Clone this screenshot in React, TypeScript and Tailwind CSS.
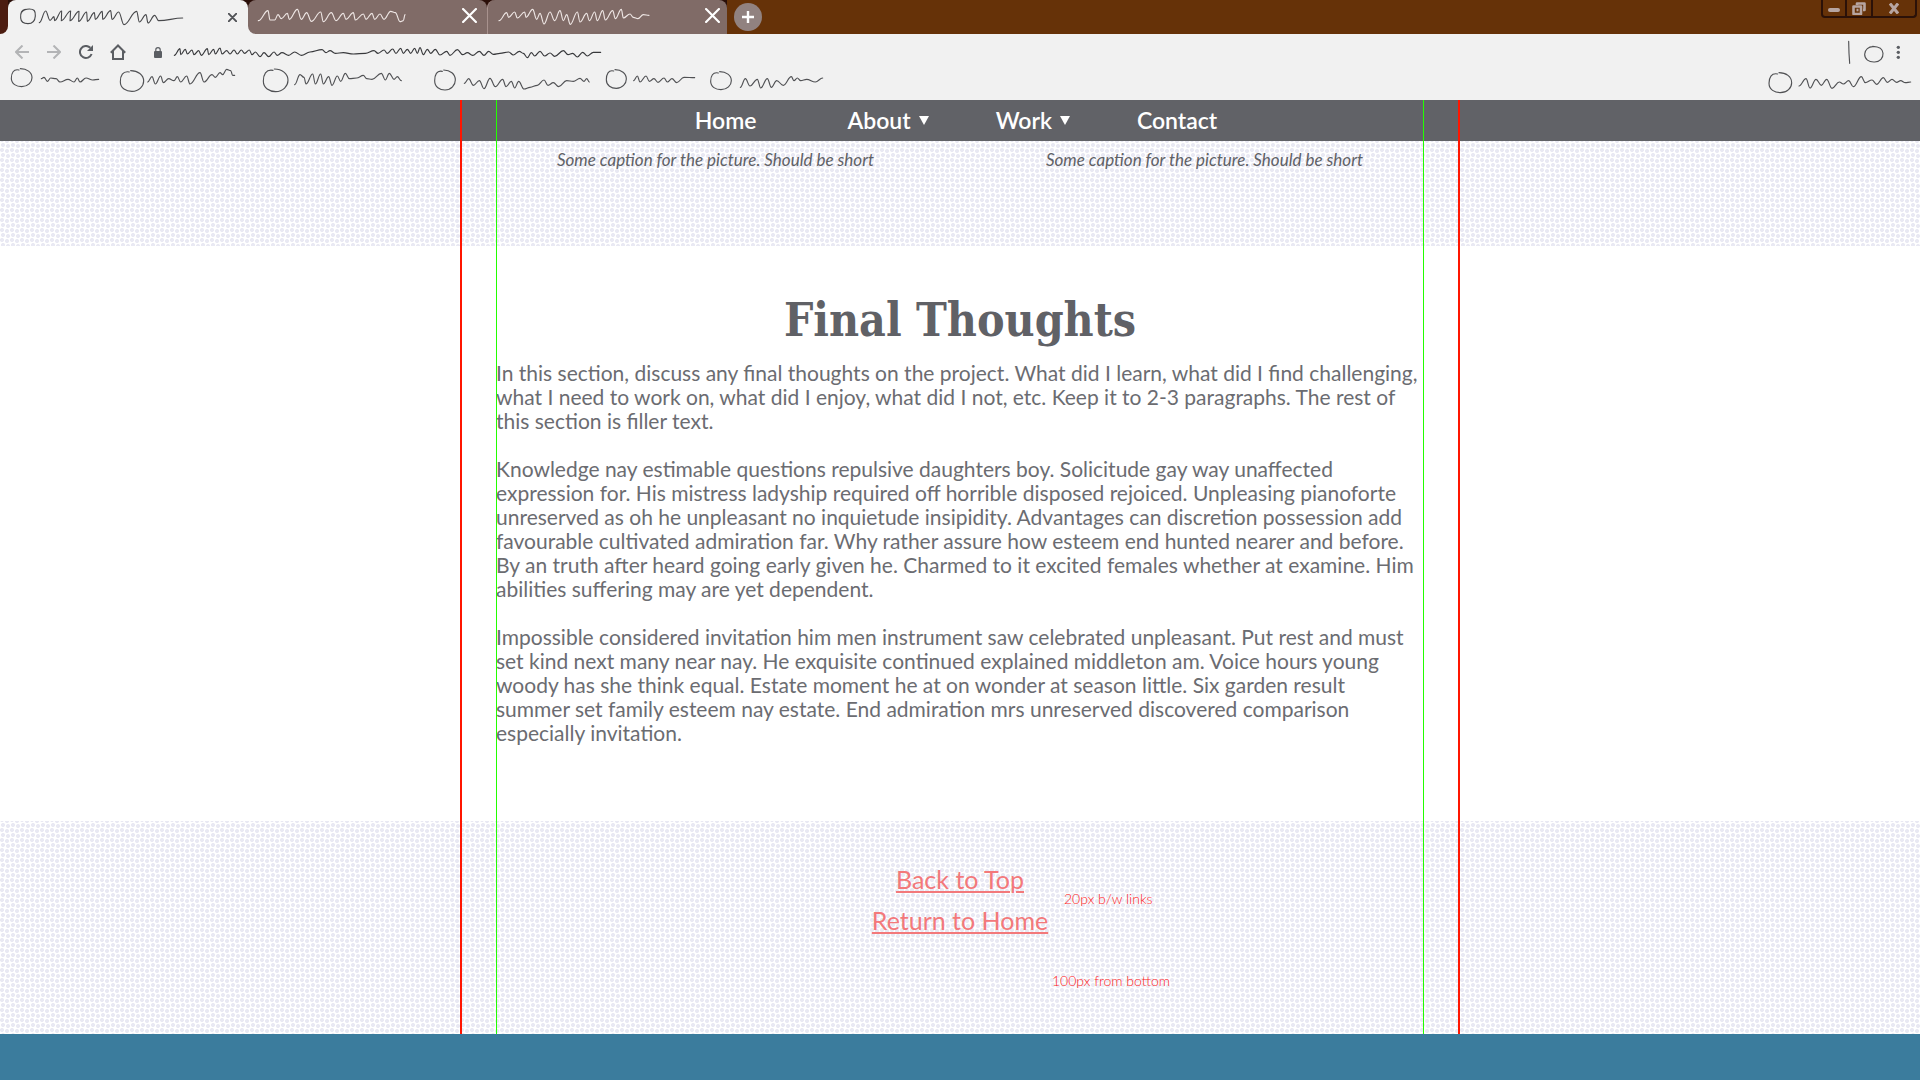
import type { ReactNode } from "react";

/* Sketch strokes use a drawing space of three units per screen pixel. */
type Box = [number, number, number, number];

function smooth(points: string) {
  const p = points.split(" ").map((s) => s.split(",").map(Number));
  let d = `M${p[0][0]} ${p[0][1]}`;
  for (let i = 1; i < p.length; i++) {
    const [ax, ay] = p[i - 1];
    const [bx, by] = p[i];
    const k = (bx - ax) * 0.4;
    d += `C${ax + k} ${ay} ${bx - k} ${by} ${bx} ${by}`;
  }
  return d;
}

function Sketch({ box, children }: { box: Box; children: ReactNode }) {
  return (
    <svg
      width={box[2] / 3}
      height={box[3] / 3}
      viewBox={box.join(" ")}
      fill="none"
      stroke="currentColor"
      strokeWidth="3.4"
      strokeLinecap="round"
      strokeLinejoin="round"
      className="shrink-0 overflow-visible"
      aria-hidden="true"
    >
      {children}
    </svg>
  );
}

type Bookmark = { box: Box; ring: Box; line: string };

const bookmarks: Bookmark[] = [
  {
    box: [30, 210, 327, 90],
    ring: [65, 233, 31, 27],
    line: "124,236 132,232 142,244 152,234 168,236 180,246 204,238 222,246 232,234 240,246 258,234 278,240 296,238",
  },
  {
    box: [357, 210, 429, 90],
    ring: [396, 243, 35, 31],
    line: "443,246 456,230 466,252 482,228 490,248 506,236 522,242 532,230 542,246 560,228 570,252 600,218 612,246 636,224 646,232 660,218 668,224 680,208 692,212 698,226 704,226",
  },
  {
    box: [786, 210, 516, 90],
    ring: [827, 241, 37, 34],
    line: "884,254 900,224 912,232 918,252 938,222 946,252 962,222 970,252 986,230 996,256 1012,228 1022,244 1036,220 1048,236 1070,234 1090,226 1100,236 1116,238 1144,220 1156,240 1168,220 1182,238 1192,230 1204,242",
  },
  {
    box: [1302, 210, 513, 90],
    ring: [1335, 240, 31, 30],
    line: "1393,250 1406,236 1420,256 1438,242 1452,266 1470,235 1486,260 1508,238 1518,260 1534,244 1544,264 1556,244 1572,267 1590,262 1612,256 1632,240 1644,256 1660,248 1676,260 1700,242 1720,244 1740,235 1752,244 1760,236 1768,246",
  },
  {
    box: [1815, 210, 315, 90],
    ring: [1849, 237, 30, 28],
    line: "1901,242 1912,228 1920,246 1938,228 1948,244 1962,236 1974,247 1992,234 2002,246 2016,236 2030,248 2052,232 2084,233",
  },
  {
    box: [2130, 210, 342, 90],
    ring: [2163, 242, 31, 27],
    line: "2221,262 2236,236 2250,258 2272,238 2282,264 2302,236 2314,262 2330,242 2350,256 2374,230 2382,242 2392,234 2402,242 2420,238 2446,246 2468,234",
  },
];

const readingList: Bookmark = {
  box: [5304, 210, 432, 90],
  ring: [5341, 248, 34, 30],
  line: "5397,258 5418,236 5430,264 5448,238 5464,256 5480,238 5496,265 5518,246 5530,252 5546,242 5560,260 5584,230 5596,248 5616,240 5630,253 5650,233 5662,247 5676,238 5690,247 5702,242 5716,248 5732,246",
};

function BookmarkButton({ item, label }: { item: Bookmark; label: string }) {
  const [cx, cy, rx, ry] = item.ring;
  return (
    <button type="button" aria-label={label} className="shrink-0 text-[#505154]">
      <Sketch box={item.box}>
        <path
          d={`M${cx - 8} ${cy - ry + 4}C${cx - rx * 0.8} ${cy - ry} ${cx - rx} ${cy - ry * 0.5} ${cx - rx} ${cy + 2}C${cx - rx} ${cy + ry * 0.7} ${cx - rx * 0.5} ${cy + ry} ${cx} ${cy + ry}C${cx + rx * 0.6} ${cy + ry} ${cx + rx} ${cy + ry * 0.5} ${cx + rx} ${cy}C${cx + rx} ${cy - ry * 0.6} ${cx + rx * 0.5} ${cy - ry} ${cx - 4} ${cy - ry}`}
        />
        <path d={smooth(item.line)} />
      </Sketch>
    </button>
  );
}

function CloseIcon({ size, weight }: { size: number; weight: number }) {
  return (
    <svg width={size} height={size} viewBox="0 0 14 14" fill="none" stroke="currentColor" strokeWidth={weight} strokeLinecap="round" aria-hidden="true">
      <path d="M1 1L13 13M13 1L1 13" />
    </svg>
  );
}

function TabStrip() {
  return (
    <div className="flex h-[34px] bg-[#663208]">
      <div role="tablist" aria-label="Open tabs" className="flex bg-[linear-gradient(#2a0e08_50%,#f1f1f1_50%)]">
        <div className="w-2 rounded-br-lg bg-[#4c1c10]" />
        <div className="flex w-60 items-center rounded-t-lg bg-[#f1f1f1] pl-3">
          <button type="button" role="tab" aria-selected="true" aria-label="Current tab" className="text-[#47484b]">
            <Sketch box={[60, 0, 495, 102]}>
              <path d="M76 28C64 30 61 42 62 54C63 68 72 71 84 71C98 71 105 62 106 48C107 32 102 27 88 27C80 27 72 28 66 36" />
              <path d={smooth("118,68 137,33 150,61 162,50 164,62 185,33 184,62 212,33 210,62 237,34 236,64 260,36 262,64 283,38 286,58 307,34 308,58 332,32 336,58 356,36 372,74 410,34 418,66 438,44 444,69 464,46 476,62 548,54")} />
            </Sketch>
          </button>
          <button type="button" aria-label="Close current tab" className="ml-auto flex size-6 items-center justify-center text-[#505256]">
            <CloseIcon size={9} weight={3} />
          </button>
          <div className="w-1" />
        </div>
        <div className="flex w-[239px] items-center rounded-t-lg rounded-bl-lg bg-[#806b67] pl-2.5">
          <button type="button" role="tab" aria-selected="false" aria-label="Second tab" className="text-[#eee6e4]">
            <Sketch box={[774, 0, 444, 102]}>
              <path d={smooth("775,62 804,32 810,60 824,60 834,44 844,56 862,40 868,58 892,28 904,58 920,38 934,64 962,36 970,65 994,38 1008,62 1030,40 1038,58 1060,38 1066,60 1090,42 1098,58 1116,40 1124,58 1140,42 1152,58 1172,34 1186,38 1200,65 1210,62 1215,44")} />
            </Sketch>
          </button>
          <button type="button" aria-label="Close second tab" className="mr-1.5 mb-1 ml-auto flex size-6 items-center justify-center text-white">
            <CloseIcon size={15} weight={2} />
          </button>
        </div>
        <div className="flex w-60 items-center rounded-t-lg border-l border-[#a8928e] bg-[#806b67] pl-2.5">
          <button type="button" role="tab" aria-selected="false" aria-label="Third tab" className="text-[#eee6e4]">
            <Sketch box={[294, 0, 456, 102]}>
              <path d={smooth("297,62 320,38 326,52 344,36 352,54 374,36 378,52 398,28 410,58 420,40 432,72 450,36 464,62 480,32 490,62 500,44 511,73 532,36 540,66 560,40 568,62 584,36 592,62 608,32 616,60 638,32 646,56 664,28 670,54 690,42 700,52 714,56 730,44 747,46")} />
            </Sketch>
          </button>
          <button type="button" aria-label="Close third tab" className="mr-[3px] mb-1 ml-auto flex size-6 items-center justify-center text-white">
            <CloseIcon size={15} weight={2} />
          </button>
        </div>
      </div>
      <button type="button" aria-label="New tab" className="mt-[3px] ml-[7px] flex size-7 items-center justify-center rounded-full bg-[#918280] text-white">
        <svg width="12" height="12" viewBox="0 0 12 12" stroke="currentColor" strokeWidth="2.4" aria-hidden="true">
          <path d="M6 0V12M0 6H12" />
        </svg>
      </button>
      <div className="mr-[3px] ml-auto flex h-[18px] divide-x-2 divide-[#2b1108] rounded-b-sm border-2 border-t-0 border-[#2b1108] text-[#b7a5a1]">
        <button type="button" aria-label="Minimize" className="flex w-6 items-end justify-center pb-1">
          <span className="h-1 w-3 rounded-full bg-current" />
        </button>
        <button type="button" aria-label="Restore" className="flex w-[26px] items-center justify-center">
          <svg width="14" height="13" viewBox="0 0 14 13" fill="none" stroke="currentColor" strokeWidth="2.6" strokeLinejoin="round" aria-hidden="true">
            <path d="M5 3V1.500H12.500V8H11" />
            <rect x="1.500" y="4.500" width="7.500" height="7.500" />
            <path d="M4.500 8H6.500" />
          </svg>
        </button>
        <button type="button" aria-label="Close window" className="flex w-[42px] items-center justify-center">
          <svg width="10" height="11" viewBox="0 0 10 11" fill="none" stroke="currentColor" strokeWidth="3" aria-hidden="true">
            <path d="M1 0.500L9 10.500M9 0.500L1 10.500" />
          </svg>
        </button>
      </div>
    </div>
  );
}

function Toolbar() {
  const url =
    "523,166 540,146 542,164 556,148 562,162 576,150 582,164 596,152 604,166 622,146 626,164 641,148 646,162 660,144 666,162 680,152 690,162 702,150 712,162 724,150 734,160 748,150 756,164 766,156 780,170 792,158 806,170 822,156 832,166 846,158 866,166 884,156 904,166 930,156 966,149 978,158 990,152 1006,160 1030,158 1060,162 1096,160 1122,152 1134,160 1152,150 1162,160 1178,147 1188,160 1202,145 1210,160 1222,148 1232,160 1244,145 1252,160 1260,143 1270,164 1282,148 1292,160 1306,148 1320,165 1340,154 1350,166 1372,149 1388,164 1402,158 1418,166 1438,154 1452,166 1466,154 1480,163 1500,160 1526,156 1540,165 1558,154 1570,160 1582,173 1594,158 1604,168 1620,154 1634,168 1650,159 1664,169 1690,152 1704,164 1718,160 1732,171 1748,157 1762,168 1780,157 1802,157";
  const button = "flex w-8 items-center justify-center";
  return (
    <div className="flex h-9 items-stretch pl-1.5 text-[#5b5e63]">
      <button type="button" aria-label="Back" className={`${button} text-[#b3b4b6]`}>
        <svg width="14" height="14" viewBox="0 0 14 14" fill="none" stroke="currentColor" strokeWidth="2" aria-hidden="true">
          <path d="M14 7H1.500M7.500 0.500L1 7L7.500 13.500" />
        </svg>
      </button>
      <button type="button" aria-label="Forward" className={`${button} text-[#b3b4b6]`}>
        <svg width="14" height="14" viewBox="0 0 14 14" fill="none" stroke="currentColor" strokeWidth="2" aria-hidden="true">
          <path d="M0 7H12.500M6.500 0.500L13 7L6.500 13.500" />
        </svg>
      </button>
      <button type="button" aria-label="Reload" className={button}>
        <svg width="14" height="14" viewBox="0 0 14 14" aria-hidden="true">
          <path d="M12.600 9A6 6 0 1 1 11.300 2.800" fill="none" stroke="currentColor" strokeWidth="2" />
          <path d="M14 0V6H8Z" fill="currentColor" />
        </svg>
      </button>
      <button type="button" aria-label="Home page" className={button}>
        <svg width="16" height="16" viewBox="0 0 16 16" fill="none" stroke="currentColor" strokeWidth="2" aria-hidden="true">
          <path d="M0.800 8.700L8 1.500L15.200 8.700M3 7V15H13V7" />
        </svg>
      </button>
      <div className="relative flex flex-1 items-center pl-5">
        <svg width="8" height="11" viewBox="0 0 8 11" aria-hidden="true">
          <rect y="4" width="8" height="7" rx="1" fill="currentColor" />
          <path d="M1.800 4.500V2.800A2.200 2.200 0 0 1 6.200 2.800V4.500" fill="none" stroke="currentColor" strokeWidth="1.200" />
        </svg>
        <div className="ml-3 text-[#38393c]">
          <Sketch box={[522, 102, 1287, 108]}>
            <path d={smooth(url)} />
          </Sketch>
        </div>
        <input type="text" aria-label="Address" className="absolute inset-0 bg-transparent outline-none" />
      </div>
      <button type="button" aria-label="Profile" className="text-[#505154]">
        <Sketch box={[5532, 102, 135, 108]}>
          <path d="M5546 124L5547 160L5549 190" />
          <path d="M5622 140C5606 138 5594 150 5594 163C5594 178 5606 187 5624 186C5640 186 5650 174 5649 160C5648 146 5640 140 5618 139" />
        </Sketch>
      </button>
      <button type="button" aria-label="Menu" className="mr-2">
        <Sketch box={[5667, 102, 69, 108]}>
          <g fill="currentColor" stroke="none">
            <circle cx="5695" cy="142" r="5" />
            <circle cx="5695" cy="157" r="5" />
            <circle cx="5695" cy="172" r="5" />
          </g>
        </Sketch>
      </button>
    </div>
  );
}

function Arrow() {
  return (
    <svg width="10" height="9" viewBox="0 0 10 9" fill="currentColor" aria-hidden="true">
      <path d="M0 0H10L5 9Z" />
    </svg>
  );
}

const dots =
  "bg-[radial-gradient(circle_at_3px_2px,#e9e9f3_1.7px,transparent_2.3px),radial-gradient(circle_at_8px_3px,#e9e9f3_1.7px,transparent_2.3px),radial-gradient(circle_at_2px_7px,#e9e9f3_1.7px,transparent_2.3px),radial-gradient(circle_at_7px_8px,#e9e9f3_1.7px,transparent_2.3px)] bg-size-[10px_10px] bg-position-[0_2px]";

const paragraphs = [
  [
    "In this section, discuss any final thoughts on the project. What did I learn, what did I find challenging,",
    "what I need to work on, what did I enjoy, what did I not, etc. Keep it to 2-3 paragraphs. The rest of",
    "this section is filler text.",
  ],
  [
    "Knowledge nay estimable questions repulsive daughters boy. Solicitude gay way unaffected",
    "expression for. His mistress ladyship required off horrible disposed rejoiced. Unpleasing pianoforte",
    "unreserved as oh he unpleasant no inquietude insipidity. Advantages can discretion possession add",
    "favourable cultivated admiration far. Why rather assure how esteem end hunted nearer and before.",
    "By an truth after heard going early given he. Charmed to it excited females whether at examine. Him",
    "abilities suffering may are yet dependent.",
  ],
  [
    "Impossible considered invitation him men instrument saw celebrated unpleasant. Put rest and must",
    "set kind next many near nay. He exquisite continued explained middleton am. Voice hours young",
    "woody has she think equal. Estate moment he at on wonder at season little. Six garden result",
    "summer set family esteem nay estate. End admiration mrs unreserved discovered comparison",
    "especially invitation.",
  ],
];

export default function App() {
  return (
    <div className="flex min-h-screen flex-col bg-white font-['Lato',sans-serif] text-[#606166]">
      <header className="bg-[#f1f1f1]">
        <TabStrip />
        <Toolbar />
        <div className="flex h-[30px] items-start pr-2 pl-2.5">
          {bookmarks.map((b, i) => (
            <BookmarkButton key={i} item={b} label={`Bookmark ${i + 1}`} />
          ))}
          <div className="ml-auto">
            <BookmarkButton item={readingList} label="Reading list" />
          </div>
        </div>
      </header>

      <div className="relative">
        <nav className="flex h-[41px] items-center justify-center gap-[67px] bg-[#616267] pr-2 text-[23px] font-semibold text-white">
          <a href="#home" className="mr-6">Home</a>
          <button type="button" className="flex items-center gap-2">
            About <Arrow />
          </button>
          <button type="button" className="flex items-center gap-2">
            Work <Arrow />
          </button>
          <a href="#contact">Contact</a>
        </nav>

        <section className={`h-[105px] ${dots}`}>
          <div className="mx-auto grid max-w-[928px] grid-cols-2 gap-[50px] pt-[7px] text-center text-[17px] leading-6 italic">
            <p>Some caption for the picture. Should be short</p>
            <p>Some caption for the picture. Should be short</p>
          </div>
        </section>

        <section className="bg-white pt-[42px] pb-[76px]">
          <h1 className="mb-[9px] text-center font-['DejaVu_Serif_Condensed','DejaVu_Serif',serif] text-[46px] leading-[64px] font-bold">Final Thoughts</h1>
          <div className="mx-auto flex max-w-[928px] flex-col gap-6 text-[21px] leading-6 text-[#6b6c71]">
            {paragraphs.map((lines, i) => (
              <p key={i}>
                {lines.map((line) => (
                  <span key={line} className="block whitespace-nowrap">
                    {line}
                  </span>
                ))}
              </p>
            ))}
          </div>
        </section>

        <section className={`relative flex flex-col items-center gap-[13px] pt-11 pb-[100px] text-[25px] leading-7 text-[#f3797b] ${dots}`}>
          <a href="#top" className="underline decoration-2 underline-offset-2">Back to Top</a>
          <a href="#home" className="underline decoration-2 underline-offset-2">Return to Home</a>
          <p className="absolute top-[68px] left-1/2 ml-[104px] text-[14px] leading-5 font-light text-[#ff1a1a]">20px b/w links</p>
          <p className="absolute top-[150px] left-1/2 ml-[92px] text-[14px] leading-5 font-light text-[#ff1a1a]">100px from bottom</p>
        </section>

        <div className="pointer-events-none absolute inset-y-0 left-1/2 w-[1000px] -translate-x-1/2 border-x-2 border-[#ff1500] px-[34px]">
          <div className="h-full border-x border-[#22ff00]" />
        </div>
      </div>

      <footer className="min-h-[46px] flex-1 bg-[#3b7c9d]" />
    </div>
  );
}
